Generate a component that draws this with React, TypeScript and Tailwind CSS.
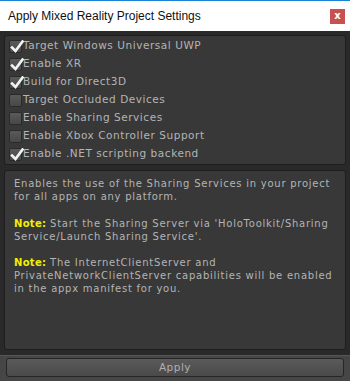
import React from "react";

const options = [
  { label: "Target Windows Universal UWP", checked: true },
  { label: "Enable XR", checked: true },
  { label: "Build for Direct3D", checked: true },
  { label: "Target Occluded Devices", checked: false },
  { label: "Enable Sharing Services", checked: false },
  { label: "Enable Xbox Controller Support", checked: false },
  { label: "Enable .NET scripting backend", checked: true },
];

const CheckBox = ({ checked }: { checked: boolean }) => (
  <div className="relative w-[13px] h-[13px] rounded-[2px] border border-[#2a2a2a] bg-gradient-to-b from-[#5a5a5a] to-[#484848] shrink-0">
    {checked && (
      <svg viewBox="0 0 14 14" className="absolute left-[0px] top-[-1px] w-[14px] h-[14px]">
        <path d="M2 7.5 L5.5 11 L12.5 1.5" fill="none" stroke="#f2f2f2" strokeWidth="2.6" strokeLinecap="square" />
      </svg>
    )}
  </div>
);

export default function App() {
  return (
    <div className="w-[350px] h-[381px] flex flex-col bg-[#292929] border-t border-[#1883d7] overflow-hidden">
      <div className="h-[30px] bg-white flex items-center justify-between pl-2 pr-[5px] shrink-0">
        <span className="text-[12px] text-[#111] font-['Liberation_Sans',sans-serif]">Apply Mixed Reality Project Settings</span>
        <div className="w-[15px] h-[15px] bg-[#c75050] flex items-center justify-center text-white text-[10px] font-bold leading-none font-['DejaVu_Sans',sans-serif] pb-[1px]">x</div>
      </div>
      <div className="flex flex-col flex-1 px-1 pt-1 font-['DejaVu_Sans',sans-serif] text-[10.5px] text-[#b4b4b4]">
        <div className="bg-[#383838] border border-[#1e1e1e] rounded-[3px] pt-[1px] pb-[1px] pl-[4px]">
          {options.map((o) => (
            <div key={o.label} className="h-[18px] flex items-center gap-[1px]">
              <CheckBox checked={o.checked} />
              <span className="tracking-[0.55px]">{o.label}</span>
            </div>
          ))}
        </div>
        <div className="mt-[5px] h-[180px] bg-[#383838] border border-[#1e1e1e] rounded-[3px] px-[9px] pt-[6px] text-[10px] leading-[13px] tracking-[0.75px]">
          <p>Enables the use of the Sharing Services in your project for all apps on any platform.</p>
          <p className="mt-[14px]">
            <span className="font-bold text-[#f0f000] tracking-[0.3px]">Note: </span>Start the Sharing Server via 'HoloToolkit/Sharing Service/Launch Sharing Service'.
          </p>
          <p className="mt-[13px]">
            <span className="font-bold text-[#f0f000] tracking-[0.3px]">Note: </span>The InternetClientServer and PrivateNetworkClientServer capabilities will be enabled in the appx manifest for you.
          </p>
        </div>
        <div className="mt-[5px] -mx-1 flex-1 bg-[#464646] border-t border-[#555] px-[6px] pt-[2px]">
          <button className="w-full h-[19px] rounded-[3px] border border-[#262626] bg-gradient-to-b from-[#5a5a5a] to-[#4a4a4a] text-[#b0b0b0] text-[10.5px] tracking-[0.5px] flex items-center justify-center">
            Apply
          </button>
        </div>
      </div>
    </div>
  );
}
